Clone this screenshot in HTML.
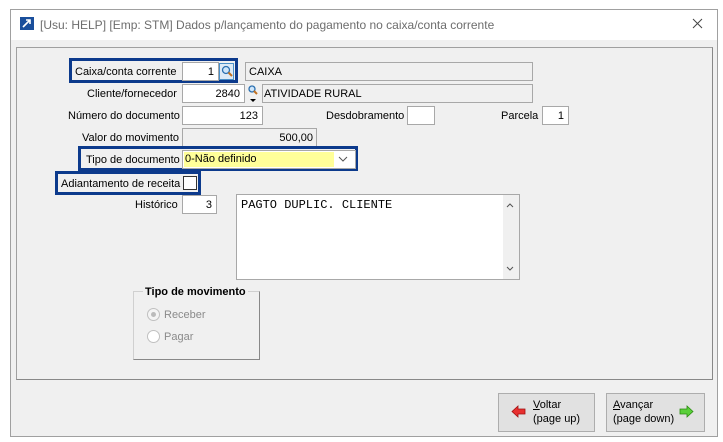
<!DOCTYPE html>
<html><head><meta charset="utf-8"><style>
*{box-sizing:border-box;margin:0;padding:0}
body{width:723px;height:442px;background:#fff;position:relative;overflow:hidden;font-family:"Liberation Sans",sans-serif;font-size:11px;color:#000}
.a{position:absolute}
.win{left:10px;top:9px;width:708px;height:428px;border:1px solid #a0a0a0;background:#f0f0f0}
.title{left:11px;top:10px;width:706px;height:30px;background:#fff}
.in{position:absolute;background:#fff;border:1px solid #a8a8a8;height:19px;line-height:18px;padding:0 4px;text-align:right}
.ro{position:absolute;background:#f0f0f0;border:1px solid #a8a8a8;height:19px;line-height:18px;padding:0 3px}
.lbl{position:absolute;line-height:15px;white-space:nowrap}
.hl{position:absolute;border:3px solid #0c3a8c}
.btn{position:absolute;background:#e1e1e1;border:1px solid #adadad;height:39px}
</style></head><body>
<div class="a win"></div>
<div class="a title"></div>
<svg class="a" style="left:20px;top:17px" width="14" height="13"><rect width="14" height="13" fill="#1a4f9c"/><path d="M3 10 L10 3 M6 3 H10 V7" stroke="#fff" stroke-width="1.6" fill="none"/></svg>
<div class="lbl" style="left:40px;top:18px;font-size:12px;color:#6d6d6d">[Usu: HELP] [Emp: STM] Dados p/lançamento do pagamento no caixa/conta corrente</div>
<svg class="a" style="left:692px;top:18px" width="11" height="11"><path d="M1 1 L10 10 M10 1 L1 10" stroke="#444" stroke-width="1"/></svg>
<div class="a" style="left:16px;top:47px;width:697px;height:333px;border:1px solid #a0a0a0;border-right-color:#888;border-bottom-color:#888"></div>

<div class="hl" style="left:69px;top:58px;width:169px;height:25px"></div>
<div class="lbl" style="left:75px;top:65px">Caixa/conta corrente</div>
<div class="in" style="left:182px;top:62px;width:37px">1</div>
<div class="a" style="left:219px;top:63px;width:15px;height:17px;border:1px solid #4a90c8;background:#dceaf7"></div>
<svg class="a" style="left:221px;top:65px" width="12" height="12"><circle cx="5" cy="5" r="3.5" stroke="#2a6fb0" fill="#cfe6fa" stroke-width="1.3"/><path d="M7.5 7.5 L11 11" stroke="#c07020" stroke-width="2"/></svg>
<div class="ro" style="left:245px;top:62px;width:288px;text-align:left">CAIXA</div>

<div class="lbl" style="left:87px;top:87px">Cliente/fornecedor</div>
<div class="in" style="left:182px;top:84px;width:63px">2840</div>
<svg class="a" style="left:247px;top:84px" width="12" height="20"><circle cx="5" cy="5" r="3" stroke="#2a6fb0" fill="#cfe6fa" stroke-width="1.3"/><path d="M7 7 L10 10" stroke="#c07020" stroke-width="2"/><path d="M3 15 H9 L6 18Z" fill="#000"/></svg>
<div class="ro" style="left:262px;top:84px;width:271px;text-align:left;padding-left:1px">ATIVIDADE RURAL</div>

<div class="lbl" style="left:68px;top:109px">Número do documento</div>
<div class="in" style="left:182px;top:106px;width:81px">123</div>
<div class="lbl" style="left:326px;top:109px">Desdobramento</div>
<div class="in" style="left:407px;top:106px;width:28px"></div>
<div class="lbl" style="left:501px;top:109px">Parcela</div>
<div class="in" style="left:542px;top:106px;width:27px">1</div>

<div class="lbl" style="left:82px;top:131px">Valor do movimento</div>
<div class="ro" style="left:182px;top:128px;width:135px;text-align:right">500,00</div>

<div class="hl" style="left:78px;top:146px;width:280px;height:25px"></div>
<div class="lbl" style="left:86px;top:153px">Tipo de documento</div>
<div class="a" style="left:182px;top:150px;width:174px;height:19px;border:1px solid #a8a8a8;background:#fff"></div>
<div class="a" style="left:184px;top:152px;width:150px;height:15px;background:#ffff99;line-height:15px;padding-left:1px">0-Não definido</div>
<svg class="a" style="left:338px;top:156px" width="10" height="6"><path d="M1 1 L5 5 L9 1" stroke="#555" fill="none"/></svg>

<div class="hl" style="left:55px;top:171px;width:146px;height:24px"></div>
<div class="lbl" style="left:61px;top:177px">Adiantamento de receita</div>
<div class="a" style="left:183px;top:176px;width:14px;height:14px;border:1px solid #333;background:#fff"></div>

<div class="lbl" style="left:135px;top:198px">Histórico</div>
<div class="in" style="left:182px;top:195px;width:35px">3</div>
<div class="a" style="left:236px;top:194px;width:284px;height:86px;border:1px solid #a8a8a8;background:#fff"></div>
<div class="a" style="left:503px;top:195px;width:16px;height:84px;background:#f0f0f0"></div>
<svg class="a" style="left:506px;top:202px" width="8" height="6"><path d="M1 5 L4 2 L7 5" stroke="#555" fill="none"/></svg>
<svg class="a" style="left:506px;top:266px" width="8" height="6"><path d="M1 1 L4 4 L7 1" stroke="#555" fill="none"/></svg>
<div class="lbl" style="left:241px;top:198px;font-family:'Liberation Mono',monospace;font-size:12px">PAGTO DUPLIC. CLIENTE</div>

<div class="a" style="left:133px;top:291px;width:127px;height:69px;border:1px solid #d0d0d0;border-right-color:#888;border-bottom-color:#888"></div>
<div class="lbl" style="left:143px;top:285px;background:#f0f0f0;padding:0 2px;font-weight:bold">Tipo de movimento</div>
<div class="a" style="left:147px;top:308px;width:13px;height:13px;border-radius:50%;border:1px solid #c0c0c0;background:#f4f4f4"></div>
<div class="a" style="left:151px;top:312px;width:5px;height:5px;border-radius:50%;background:#bbb"></div>
<div class="lbl" style="left:164px;top:308px;color:#8a8a8a">Receber</div>
<div class="a" style="left:147px;top:330px;width:13px;height:13px;border-radius:50%;border:1px solid #c0c0c0;background:#fff"></div>
<div class="lbl" style="left:164px;top:330px;color:#8a8a8a">Pagar</div>

<div class="btn" style="left:498px;top:393px;width:97px"></div>
<svg class="a" style="left:511px;top:405px" width="15" height="13"><path d="M1 6.5 L7 1 V4 H14 V9 H7 V12Z" fill="#e83030" stroke="#a01010" stroke-width=".8"/></svg>
<div class="lbl" style="left:533px;top:398px;line-height:14px"><u>V</u>oltar<br>(page up)</div>
<div class="btn" style="left:606px;top:393px;width:99px"></div>
<div class="lbl" style="left:613px;top:398px;line-height:14px"><u>A</u>vançar<br>(page down)</div>
<svg class="a" style="left:679px;top:405px" width="15" height="13"><path d="M14 6.5 L8 1 V4 H1 V9 H8 V12Z" fill="#5ad03a" stroke="#2a8a10" stroke-width=".8"/></svg>
</body></html>
